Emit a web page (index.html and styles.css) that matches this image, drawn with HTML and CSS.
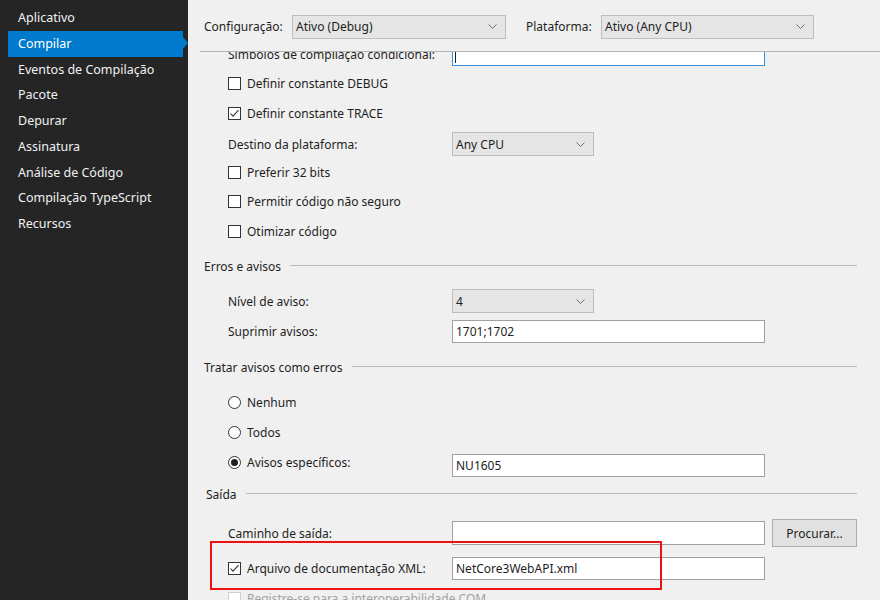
FILE: index.html
```html
<!DOCTYPE html>
<html lang="pt-BR">
<head>
<meta charset="utf-8">
<title>Propriedades do projeto - Compilar</title>
<link rel="stylesheet" href="styles.css">
</head>
<body>
<div class="app">
  <nav class="sidebar">
    <ul class="nav">
      <li class="nav-item">Aplicativo</li>
      <li class="nav-item active">Compilar</li>
      <li class="nav-item">Eventos de Compilação</li>
      <li class="nav-item">Pacote</li>
      <li class="nav-item">Depurar</li>
      <li class="nav-item">Assinatura</li>
      <li class="nav-item">Análise de Código</li>
      <li class="nav-item">Compilação TypeScript</li>
      <li class="nav-item">Recursos</li>
    </ul>
  </nav>
  <main class="main">
    <div class="toolbar">
      <span class="tb-label tb-config">Configuração:</span>
      <div class="combo combo-config"><span class="combo-text">Ativo (Debug)</span><svg class="chev" width="9" height="5" viewBox="0 0 9 5"><polyline points="0.5,0.5 4.5,4.5 8.5,0.5"/></svg></div>
      <span class="tb-label tb-plat">Plataforma:</span>
      <div class="combo combo-plat"><span class="combo-text">Ativo (Any CPU)</span><svg class="chev" width="9" height="5" viewBox="0 0 9 5"><polyline points="0.5,0.5 4.5,4.5 8.5,0.5"/></svg></div>
    </div>
    <div class="viewport">
      <div class="content">
        <div class="row indent">
          <span class="label">Símbolos de compilação condicional:</span>
          <div class="input input-focus"><span class="caret"></span></div>
        </div>
        <div class="row indent">
          <span class="box"></span><span class="ctext">Definir constante DEBUG</span>
        </div>
        <div class="row indent">
          <span class="box"><svg width="11" height="11" viewBox="0 0 11 11"><polyline points="1.5,5.5 4,8.2 9.5,2.2"/></svg></span><span class="ctext">Definir constante TRACE</span>
        </div>
        <div class="row indent row-destino">
          <span class="label">Destino da plataforma:</span>
          <div class="combo combo-short"><span class="combo-text">Any CPU</span><svg class="chev" width="9" height="5" viewBox="0 0 9 5"><polyline points="0.5,0.5 4.5,4.5 8.5,0.5"/></svg></div>
        </div>
        <div class="row indent">
          <span class="box"></span><span class="ctext">Preferir 32 bits</span>
        </div>
        <div class="row indent">
          <span class="box"></span><span class="ctext">Permitir código não seguro</span>
        </div>
        <div class="row indent">
          <span class="box"></span><span class="ctext">Otimizar código</span>
        </div>

        <div class="section sec-erros">Erros e avisos</div>
        <div class="row row30 indent first-after-sec">
          <span class="label">Nível de aviso:</span>
          <div class="combo combo-short"><span class="combo-text">4</span><svg class="chev" width="9" height="5" viewBox="0 0 9 5"><polyline points="0.5,0.5 4.5,4.5 8.5,0.5"/></svg></div>
        </div>
        <div class="row row30 indent">
          <span class="label">Suprimir avisos:</span>
          <div class="input">1701;1702</div>
        </div>

        <div class="section sec-tratar">Tratar avisos como erros</div>
        <div class="row row30 indent first-after-sec">
          <span class="radio"></span><span class="ctext">Nenhum</span>
        </div>
        <div class="row row30 indent">
          <span class="radio"></span><span class="ctext">Todos</span>
        </div>
        <div class="row row30 indent">
          <span class="radio checked"></span><span class="ctext rlabel">Avisos específicos:</span>
          <div class="input input-low">NU1605</div>
        </div>

        <div class="section sec-saida">Saída</div>
        <div class="row row30 indent row-caminho">
          <span class="label">Caminho de saída:</span>
          <div class="input input-tall"></div>
          <button class="btn">Procurar...</button>
        </div>
        <div class="row row30 indent row-xml">
          <span class="box"><svg width="11" height="11" viewBox="0 0 11 11"><polyline points="1.5,5.5 4,8.2 9.5,2.2"/></svg></span><span class="ctext xlabel">Arquivo de documentação XML:</span>
          <div class="input">NetCore3WebAPI.xml</div>
        </div>
        <div class="row row30 indent disabled">
          <span class="box"></span><span class="ctext">Registre-se para a interoperabilidade COM</span>
        </div>
      </div>
      <div class="highlight"></div>
    </div>
  </main>
</div>
</body>
</html>
```

FILE: styles.css
```css
* { box-sizing: border-box; }

html, body {
  margin: 0;
  padding: 0;
  width: 880px;
  height: 600px;
  overflow: hidden;
}

body {
  font-family: "Noto Sans", "Open Sans", "DejaVu Sans", sans-serif;
  font-size: 12px;
  color: #1e1e1e;
  background: #f0f0f0;
}

.app {
  display: flex;
  height: 600px;
}

/* Sidebar */
.sidebar {
  width: 188px;
  flex: none;
  background: #252526;
  color: #f1f1f1;
  font-size: 12.5px;
}

.nav {
  list-style: none;
  margin: 0;
  padding: 5px 0 0 0;
}

.nav-item {
  height: 25.75px;
  line-height: 25.75px;
  margin-left: 8px;
  width: 175px;
  padding-left: 10px;
  position: relative;
  white-space: nowrap;
}

.nav-item.active {
  background: #007acc;
  color: #ffffff;
}

.nav-item.active::after {
  content: "";
  position: absolute;
  right: -5px;
  top: 6.5px;
  border-left: 5px solid #007acc;
  border-top: 6px solid transparent;
  border-bottom: 6px solid transparent;
}

/* Main */
.main {
  flex: 1;
  display: flex;
  flex-direction: column;
  min-width: 0;
}

.toolbar {
  height: 52px;
  flex: none;
  margin-left: 12px;
  padding: 2px 0 0 4px;
  border-bottom: 1px solid #b4b4b4;
  display: flex;
  align-items: center;
}

.tb-label { white-space: nowrap; }
.tb-config { width: 88px; }
.tb-plat { width: 75px; margin-left: 20px; }

.combo {
  height: 24px;
  background: #e5e5e5;
  border: 1px solid #bdbdbd;
  display: flex;
  align-items: center;
  padding: 0 8px 0 3px;
}

.combo-text { flex: 1; white-space: nowrap; }
.chev { flex: none; }
.chev polyline { fill: none; stroke: #707070; stroke-width: 1; }

.combo-config { width: 214px; }
.combo-plat { width: 213px; }
.combo-short { width: 142px; }

.viewport {
  flex: 1;
  overflow: hidden;
  position: relative;
}

.content {
  margin-top: -12.5px;
  padding: 0 23px 0 16px;
}

.row {
  height: 29.5px;
  display: flex;
  align-items: center;
  white-space: nowrap;
}

.row-destino { padding-top: 3px; }

.row30 { height: 30px; }
.indent { padding-left: 24px; }

.label { width: 224px; flex: none; }

.ctext { margin-left: 6px; }
.rlabel { width: 205px; flex: none; }
.xlabel { width: 205px; flex: none; }

.box {
  width: 13px;
  height: 13px;
  flex: none;
  border: 1px solid #333333;
  background: #ffffff;
  display: flex;
  align-items: center;
  justify-content: center;
}

.box polyline { fill: none; stroke: #333333; stroke-width: 1.1; }

.radio {
  width: 13px;
  height: 13px;
  flex: none;
  border: 1px solid #333333;
  border-radius: 50%;
  background: #ffffff;
  position: relative;
}

.radio.checked::after {
  content: "";
  position: absolute;
  left: 2px;
  top: 2px;
  width: 7px;
  height: 7px;
  border-radius: 50%;
  background: #1e1e1e;
}

.input {
  width: 313px;
  height: 23px;
  flex: none;
  background: #ffffff;
  border: 1px solid #a0a0a0;
  padding: 0 3px;
  display: flex;
  align-items: center;
}

.input-tall { height: 24px; }
.input-low { align-self: flex-end; }

.input-focus {
  border-color: #3c8fd8;
}

.caret {
  width: 1px;
  height: 11px;
  background: #1e1e1e;
  margin-left: -1px;
  margin-top: 6px;
}

.section {
  height: 24px;
  display: flex;
  align-items: center;
  white-space: nowrap;
}

.section::after {
  content: "";
  flex: 1;
  height: 1px;
  background: #b9b9b9;
  margin-left: 9px;
  margin-top: -1px;
}

.sec-erros { margin-top: 8px; }
.sec-tratar { margin-top: 9px; }
.sec-saida { margin-top: 5px; padding-left: 2px; }

.first-after-sec { margin-top: 8px; }
.row-caminho { margin-top: 12px; }
.row-xml { margin-top: 5px; }

.btn {
  margin-left: 7px;
  width: 85px;
  height: 28px;
  background: #e1e1e1;
  border: 1px solid #adadad;
  font: inherit;
  color: #1e1e1e;
  padding: 0;
}

.disabled { color: #a2a2a2; }
.disabled .box { border-color: #cfcfcf; background: #ffffff; }

.highlight {
  position: absolute;
  left: 22px;
  top: 489px;
  width: 452px;
  height: 49px;
  border: 2px solid #ee1111;
  pointer-events: none;
}
```
